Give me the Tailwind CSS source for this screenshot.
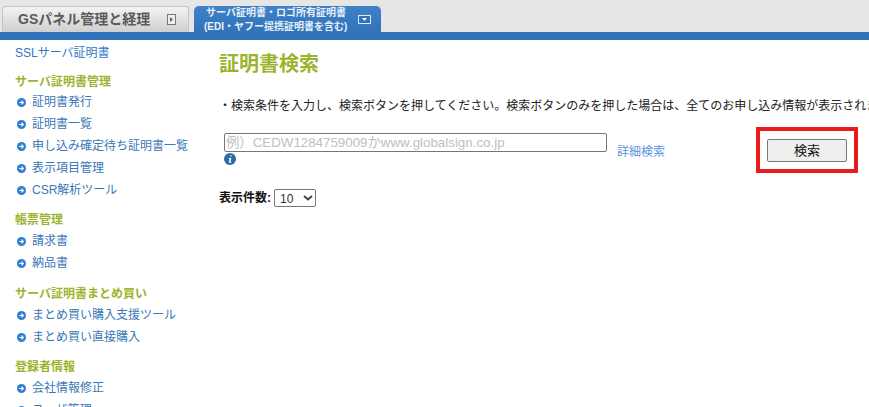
<!DOCTYPE html>
<html lang="ja">

<head>
    <meta charset="UTF-8" />
    <title>証明書検索</title>
    <script src="https://cdn.jsdelivr.net/npm/@tailwindcss/browser@4"></script>
</head>

<body class="h-[407px] w-[869px] overflow-hidden bg-white font-['Liberation_Sans','Noto_Sans_CJK_JP',sans-serif] text-[12px]">
    <!-- tabs -->
    <div class="flex h-[32px] items-end bg-[#e6e6e6] pl-[2px]">
        <div class="flex h-[26px] w-[187px] items-center rounded-t-[4px] border border-b-0 border-[#c4c4c4] bg-gradient-to-b from-[#f4f4f4] to-[#cfcfcf] pl-[15px]">
            <span class="w-[149px] text-[14px] font-bold text-[#5a5a5a]">GSパネル管理と経理</span>
            <svg width="10" height="11" viewBox="0 0 10 11">
                <rect x="0.5" y="0.5" width="8" height="10" fill="#eee" stroke="#777" />
                <path d="M3 3l3 2.5L3 8z" fill="#666" />
            </svg>
        </div>
        <div class="ml-[5px] flex h-[26px] w-[187px] items-center rounded-t-[5px] bg-gradient-to-b from-[#3f82c9] to-[#3273ba] pl-[10px]">
            <div class="w-[154px] pt-[2px] text-[10px] leading-[14px] font-bold text-[#e8f0f8]">
                <div class="pl-[2px]">サーバ証明書・ロゴ所有証明書</div>
                <div>(EDI・ヤフー提携証明書を含む)</div>
            </div>
            <svg width="13" height="9" viewBox="0 0 13 9">
                <rect x="0.5" y="0.5" width="12" height="8" fill="#3273ba" stroke="#dfe9f4" />
                <path d="M4 3h5L6.5 6z" fill="#fff" />
            </svg>
        </div>
    </div>
    <div class="h-[8px] bg-[#3173ba]"></div>

    <div class="relative flex">
        <!-- sidebar -->
        <div class="w-[219px] shrink-0 pt-[5px] pl-[15px]">
            <a class="block h-[16px] leading-[16px] text-[#2f78c4]">SSLサーバ証明書</a>

            <h3 class="mt-[13px] h-[16px] leading-[16px] font-bold text-[#9ab52d]">サーバ証明書管理</h3>
            <ul class="mt-[1px]">
                <li class="flex h-[22px] items-center gap-[6px] text-[#3b78b8]"><svg width="9" height="9" viewBox="0 0 10 10" class="ml-[2px]"><circle cx="5" cy="5" r="5" fill="#2f7fd0" /><path d="M2.5 5h4M5 3l2 2-2 2" fill="none" stroke="#fff" stroke-width="1.3" /></svg>証明書発行</li>
                <li class="flex h-[22px] items-center gap-[6px] text-[#3b78b8]"><svg width="9" height="9" viewBox="0 0 10 10" class="ml-[2px]"><circle cx="5" cy="5" r="5" fill="#2f7fd0" /><path d="M2.5 5h4M5 3l2 2-2 2" fill="none" stroke="#fff" stroke-width="1.3" /></svg>証明書一覧</li>
                <li class="flex h-[22px] items-center gap-[6px] text-[#3b78b8]"><svg width="9" height="9" viewBox="0 0 10 10" class="ml-[2px]"><circle cx="5" cy="5" r="5" fill="#2f7fd0" /><path d="M2.5 5h4M5 3l2 2-2 2" fill="none" stroke="#fff" stroke-width="1.3" /></svg>申し込み確定待ち証明書一覧</li>
                <li class="flex h-[22px] items-center gap-[6px] text-[#3b78b8]"><svg width="9" height="9" viewBox="0 0 10 10" class="ml-[2px]"><circle cx="5" cy="5" r="5" fill="#2f7fd0" /><path d="M2.5 5h4M5 3l2 2-2 2" fill="none" stroke="#fff" stroke-width="1.3" /></svg>表示項目管理</li>
                <li class="flex h-[22px] items-center gap-[6px] text-[#3b78b8]"><svg width="9" height="9" viewBox="0 0 10 10" class="ml-[2px]"><circle cx="5" cy="5" r="5" fill="#2f7fd0" /><path d="M2.5 5h4M5 3l2 2-2 2" fill="none" stroke="#fff" stroke-width="1.3" /></svg>CSR解析ツール</li>
            </ul>

            <h3 class="mt-[11px] h-[16px] leading-[16px] font-bold text-[#9ab52d]">帳票管理</h3>
            <ul class="mt-[2px]">
                <li class="flex h-[22px] items-center gap-[6px] text-[#3b78b8]"><svg width="9" height="9" viewBox="0 0 10 10" class="ml-[2px]"><circle cx="5" cy="5" r="5" fill="#2f7fd0" /><path d="M2.5 5h4M5 3l2 2-2 2" fill="none" stroke="#fff" stroke-width="1.3" /></svg>請求書</li>
                <li class="flex h-[22px] items-center gap-[6px] text-[#3b78b8]"><svg width="9" height="9" viewBox="0 0 10 10" class="ml-[2px]"><circle cx="5" cy="5" r="5" fill="#2f7fd0" /><path d="M2.5 5h4M5 3l2 2-2 2" fill="none" stroke="#fff" stroke-width="1.3" /></svg>納品書</li>
            </ul>

            <h3 class="mt-[12px] h-[16px] leading-[16px] font-bold text-[#9ab52d]">サーバ証明書まとめ買い</h3>
            <ul class="mt-[2px]">
                <li class="flex h-[22px] items-center gap-[6px] text-[#3b78b8]"><svg width="9" height="9" viewBox="0 0 10 10" class="ml-[2px]"><circle cx="5" cy="5" r="5" fill="#2f7fd0" /><path d="M2.5 5h4M5 3l2 2-2 2" fill="none" stroke="#fff" stroke-width="1.3" /></svg>まとめ買い購入支援ツール</li>
                <li class="flex h-[22px] items-center gap-[6px] text-[#3b78b8]"><svg width="9" height="9" viewBox="0 0 10 10" class="ml-[2px]"><circle cx="5" cy="5" r="5" fill="#2f7fd0" /><path d="M2.5 5h4M5 3l2 2-2 2" fill="none" stroke="#fff" stroke-width="1.3" /></svg>まとめ買い直接購入</li>
            </ul>

            <h3 class="mt-[11px] h-[16px] leading-[16px] font-bold text-[#9ab52d]">登録者情報</h3>
            <ul class="mt-[2px]">
                <li class="flex h-[22px] items-center gap-[6px] text-[#3b78b8]"><svg width="9" height="9" viewBox="0 0 10 10" class="ml-[2px]"><circle cx="5" cy="5" r="5" fill="#2f7fd0" /><path d="M2.5 5h4M5 3l2 2-2 2" fill="none" stroke="#fff" stroke-width="1.3" /></svg>会社情報修正</li>
                <li class="flex h-[22px] items-center gap-[6px] text-[#3b78b8]"><svg width="9" height="9" viewBox="0 0 10 10" class="ml-[2px]"><circle cx="5" cy="5" r="5" fill="#2f7fd0" /><path d="M2.5 5h4M5 3l2 2-2 2" fill="none" stroke="#fff" stroke-width="1.3" /></svg>ユーザ管理</li>
            </ul>
        </div>

        <!-- main -->
        <div class="min-w-0 flex-1 pt-[12px]">
            <h1 class="h-[24px] text-[20px] leading-[24px] font-bold text-[#9ab52d]">証明書検索</h1>
            <p class="mt-[22px] h-[16px] overflow-hidden leading-[16px] whitespace-nowrap text-[#222]">・検索条件を入力し、検索ボタンを押してください。検索ボタンのみを押した場合は、全てのお申し込み情報が表示されます。</p>
            <div class="mt-[19px] flex items-start pl-[5px]">
                <div class="w-[383px]">
                    <input type="text" placeholder="例）CEDW1284759009かwww.globalsign.co.jp" class="block h-[19px] w-[383px] rounded-[2px] border border-[#767676] px-[1px] pt-[1px] text-[13.33px] placeholder:text-[#c0c0c0]" />
                    <svg width="12" height="12" viewBox="0 0 12 12" class="mt-[1px]">
                        <circle cx="6" cy="6" r="6" fill="#2f6aa5" />
                        <path d="M6.2 2.3h1.3v1.3H6.2zM4.8 5h2.5L6.5 9h.9v.8H4.7L5.500 5.800h-.7z" fill="#fff" />
                    </svg>
                </div>
                <a class="mt-[11px] ml-[10px] h-[16px] w-[48px] leading-[16px] text-[#5b93e0]">詳細検索</a>
                <button class="mt-[6px] ml-[102px] h-[23px] w-[80px] rounded-[2px] border border-[#767676] bg-[#efefef] text-[13px] text-[#111]">検索</button>
            </div>
            <div class="mt-[24px] flex items-center gap-[3px]">
                <span class="font-bold text-[#111]">表示件数:</span>
                <div class="relative h-[18px] w-[42px]">
                    <select class="h-[18px] w-[42px] appearance-none rounded-[2px] border border-[#767676] bg-white pl-[5px] text-[12px] text-[#333]">
                        <option>10</option>
                    </select>
                    <svg width="10" height="6" viewBox="0 0 10 6" class="pointer-events-none absolute top-[6px] left-[29px]">
                        <path d="M1 1l4 3.500L9 1" fill="none" stroke="#444" stroke-width="2" />
                    </svg>
                </div>
            </div>
        </div>

        <!-- red highlight on the search button -->
        <div class="absolute top-[87px] left-[756px] h-[46px] w-[102px] border-[4px] border-[#e81c1c]"></div>
    </div>
</body>

</html>
